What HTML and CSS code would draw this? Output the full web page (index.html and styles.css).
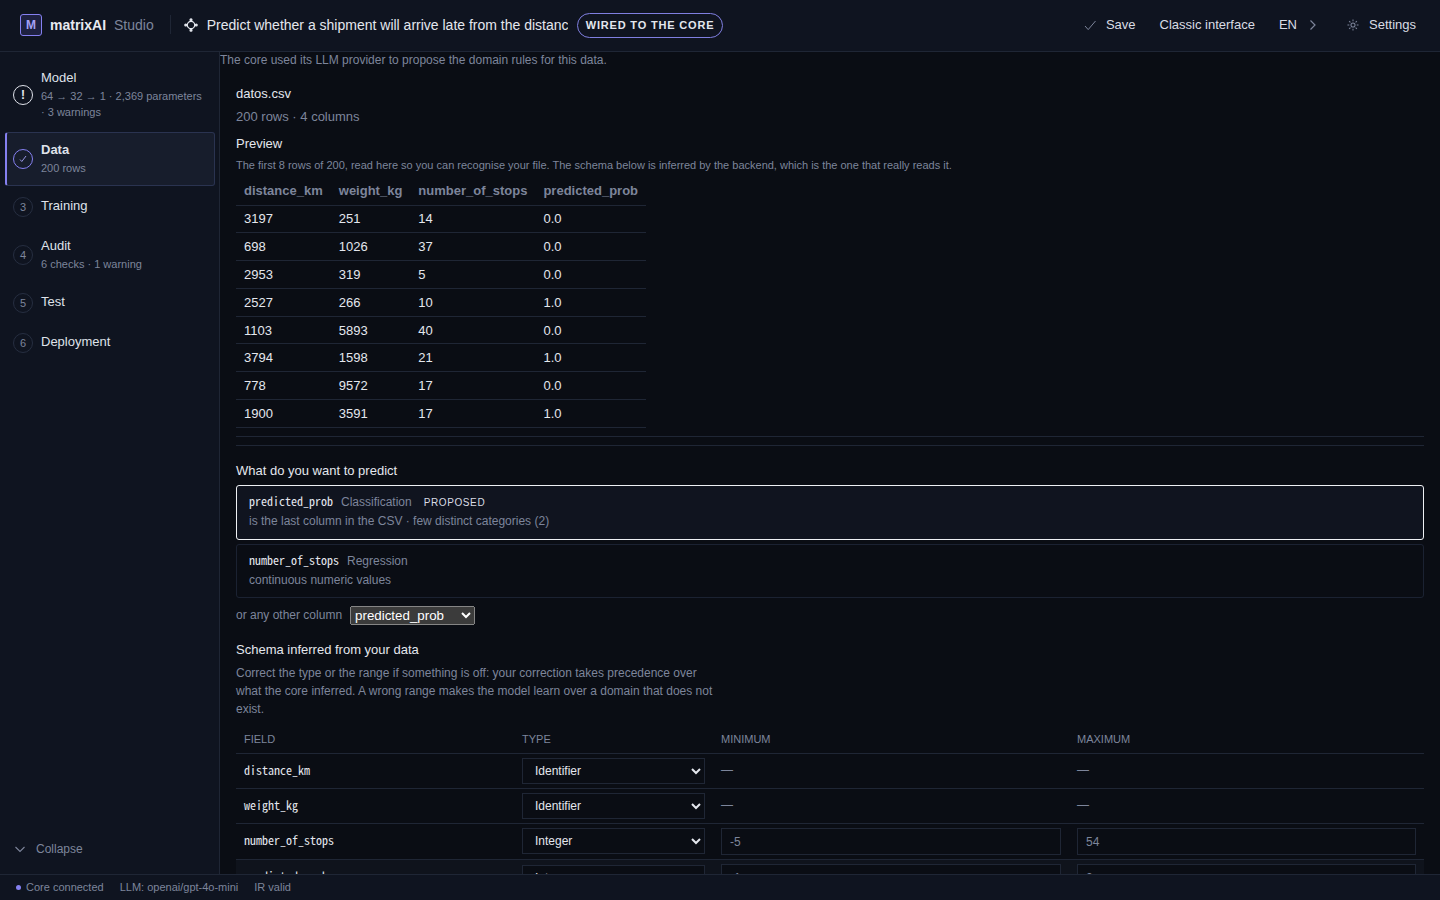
FILE: index.html
```html
<!DOCTYPE html>
<html lang="en">
<head>
<meta charset="utf-8">
<title>matrixAI Studio</title>
<link rel="stylesheet" href="styles.css">
</head>
<body>
<div class="app">
  <header class="topbar">
    <div class="brand">
      <span class="logo">M</span>
      <span class="brand-name">matrixAI</span>
      <span class="brand-sub">Studio</span>
    </div>
    <span class="divider"></span>
    <svg class="nodes" width="14" height="14" viewBox="0 0 14 14" fill="none" stroke="currentColor" stroke-width="1.2"><circle cx="7" cy="7" r="3.700"/><circle cx="7" cy="1.800" r="1" fill="currentColor"/><circle cx="7" cy="12.200" r="1" fill="currentColor"/><circle cx="1.800" cy="7" r="1" fill="currentColor"/><circle cx="12.200" cy="7" r="1" fill="currentColor"/></svg>
    <span class="project-title">Predict whether a shipment will arrive late from the distanc</span>
    <span class="pill">WIRED TO THE CORE</span>
    <nav class="top-actions">
      <span class="action"><svg class="ico" width="12" height="12" viewBox="0 0 12 12" fill="none" stroke="currentColor" stroke-width="1"><path d="M1 7l3.200 3.600L11.500 2"/></svg>Save</span>
      <span class="action">Classic interface</span>
      <span class="action lang">EN<svg class="ico" width="8" height="12" viewBox="0 0 8 12" fill="none" stroke="currentColor" stroke-width="1.200"><path d="M1.500 1.500L6 6l-4.500 4.500"/></svg></span>
      <span class="action"><svg class="ico" width="12" height="12" viewBox="0 0 13 13" fill="none" stroke="currentColor" stroke-width="1.100"><circle cx="6.500" cy="6.500" r="2.200"/><path d="M6.500 0.500v2M6.500 10.500v2M0.500 6.500h2M10.500 6.500h2M2.300 2.300l1.400 1.400M9.300 9.300l1.400 1.400M2.300 10.700l1.400-1.400M9.300 3.700l1.400-1.400"/></svg>Settings</span>
    </nav>
  </header>

  <div class="body">
    <aside class="sidebar">
      <ol class="steps">
        <li class="step">
          <span class="bullet warn">!</span>
          <div class="step-text"><div class="step-title">Model</div><div class="step-sub">64 → 32 → 1 · 2,369 parameters · 3 warnings</div></div>
        </li>
        <li class="step active">
          <span class="bullet done"><svg width="10" height="10" viewBox="0 0 10 10" fill="none" stroke="currentColor" stroke-width="0.900"><path d="M2 5.500l1.800 2L8 2"/></svg></span>
          <div class="step-text"><div class="step-title">Data</div><div class="step-sub">200 rows</div></div>
        </li>
        <li class="step">
          <span class="bullet">3</span>
          <div class="step-text"><div class="step-title">Training</div></div>
        </li>
        <li class="step">
          <span class="bullet">4</span>
          <div class="step-text"><div class="step-title">Audit</div><div class="step-sub">6 checks · 1 warning</div></div>
        </li>
        <li class="step">
          <span class="bullet">5</span>
          <div class="step-text"><div class="step-title">Test</div></div>
        </li>
        <li class="step">
          <span class="bullet">6</span>
          <div class="step-text"><div class="step-title">Deployment</div></div>
        </li>
      </ol>
      <div class="collapse"><svg width="12" height="12" viewBox="0 0 12 12" fill="none" stroke="currentColor" stroke-width="1.100"><path d="M1.500 4L6 8.500 10.500 4"/></svg>Collapse</div>
    </aside>

    <main class="main">
      <p class="lead">The core used its LLM provider to propose the domain rules for this data.</p>
      <section class="panel">
        <div class="file-name">datos.csv</div>
        <div class="file-meta">200 rows · 4 columns</div>
        <h3 class="heading">Preview</h3>
        <p class="hint">The first 8 rows of 200, read here so you can recognise your file. The schema below is inferred by the backend, which is the one that really reads it.</p>
        <table class="preview">
          <thead><tr><th>distance_km</th><th>weight_kg</th><th>number_of_stops</th><th>predicted_prob</th></tr></thead>
          <tbody>
            <tr><td>3197</td><td>251</td><td>14</td><td>0.0</td></tr>
            <tr><td>698</td><td>1026</td><td>37</td><td>0.0</td></tr>
            <tr><td>2953</td><td>319</td><td>5</td><td>0.0</td></tr>
            <tr><td>2527</td><td>266</td><td>10</td><td>1.0</td></tr>
            <tr><td>1103</td><td>5893</td><td>40</td><td>0.0</td></tr>
            <tr><td>3794</td><td>1598</td><td>21</td><td>1.0</td></tr>
            <tr><td>778</td><td>9572</td><td>17</td><td>0.0</td></tr>
            <tr><td>1900</td><td>3591</td><td>17</td><td>1.0</td></tr>
          </tbody>
        </table>
        <hr class="rule">
        <hr class="rule second">

        <h3 class="heading predict">What do you want to predict</h3>
        <div class="choice selected">
          <div class="choice-line"><code class="mono">predicted_prob</code><span class="kind">Classification</span><span class="tag">PROPOSED</span></div>
          <div class="choice-why">is the last column in the CSV · few distinct categories (2)</div>
        </div>
        <div class="choice">
          <div class="choice-line"><code class="mono">number_of_stops</code><span class="kind">Regression</span></div>
          <div class="choice-why">continuous numeric values</div>
        </div>
        <div class="other">
          <span>or any other column</span>
          <select class="native"><option>predicted_prob</option><option>number_of_stops</option><option>weight_kg</option><option>distance_km</option></select>
        </div>

        <h3 class="heading schema-title">Schema inferred from your data</h3>
        <p class="schema-note">Correct the type or the range if something is off: your correction takes precedence over what the core inferred. A wrong range makes the model learn over a domain that does not exist.</p>
        <table class="schema">
          <colgroup><col class="c-field"><col class="c-type"><col class="c-min"><col class="c-max"></colgroup>
          <thead><tr><th>FIELD</th><th>TYPE</th><th>MINIMUM</th><th>MAXIMUM</th></tr></thead>
          <tbody>
            <tr><td><code class="mono">distance_km</code></td><td><select class="field"><option>Identifier</option></select></td><td class="dash">—</td><td class="dash">—</td></tr>
            <tr><td><code class="mono">weight_kg</code></td><td><select class="field"><option>Identifier</option></select></td><td class="dash">—</td><td class="dash">—</td></tr>
            <tr><td><code class="mono">number_of_stops</code></td><td class="type-top"><select class="field"><option>Integer</option></select></td><td><input class="num" value="-5"></td><td><input class="num" value="54"></td></tr>
            <tr class="target"><td><code class="mono">predicted_prob</code><span class="badge">target</span></td><td><select class="field"><option>Integer</option></select></td><td><input class="num" value="-1"></td><td><input class="num" value="2"></td></tr>
          </tbody>
        </table>
      </section>
    </main>
  </div>

  <footer class="status">
    <span class="status-item"><span class="dot"></span>Core connected</span>
    <span class="status-item">LLM: openai/gpt-4o-mini</span>
    <span class="status-item">IR valid</span>
  </footer>
</div>
</body>
</html>
```
FILE: styles.css
```css
* { box-sizing: border-box; }
html { color-scheme: dark; }
html, body { margin: 0; height: 100%; }
body {
  font-family: "Liberation Sans", Arial, sans-serif;
  background: #0a0d14;
  color: #e4e7ee;
  font-size: 13px;
}
.app { height: 900px; display: flex; flex-direction: column; overflow: hidden; }

/* Top bar */
.topbar {
  height: 52px;
  flex: none;
  display: flex;
  align-items: center;
  padding: 0 24px 2px 20px;
  background: #0f1420;
  border-bottom: 1px solid #1f2635;
}
.brand { display: flex; align-items: center; }
.logo {
  width: 22px; height: 22px;
  display: flex; align-items: center; justify-content: center;
  border: 1px solid #8580f0;
  border-radius: 3px;
  background: #1e2140;
  color: #a5a1f5;
  font-size: 12px; font-weight: 700;
  margin-right: 8px;
}
.brand-name { font-size: 14px; font-weight: 700; color: #e8eaf0; margin-right: 8px; }
.brand-sub { font-size: 14px; color: #7d859b; }
.divider { width: 1px; height: 19px; background: #1f2635; margin: 0 13px 0 16px; }
.nodes { color: #e4e7ee; margin-right: 9px; flex: none; }
.project-title { width: 361px; font-size: 14px; white-space: nowrap; overflow: hidden; color: #e4e7ee; }
.pill {
  margin: 1px 0 0 9px;
  height: 25px;
  padding: 0 8px;
  display: flex; align-items: center;
  border: 1px solid #7f7fe0;
  border-radius: 13px;
  font-size: 11px; font-weight: 700;
  letter-spacing: 0.82px;
  color: #e4e7ee;
  white-space: nowrap;
}
.top-actions { margin-left: auto; display: flex; align-items: center; gap: 24px; color: #d9dce4; }
.action { display: flex; align-items: center; gap: 10px; font-size: 13px; }
.lang { gap: 12px; margin-right: 6px; }
.ico { color: #7d859b; flex: none; }

/* Layout */
.body { flex: 1; min-height: 0; display: flex; }
.sidebar {
  width: 220px;
  flex: none;
  display: flex;
  flex-direction: column;
  background: #0f1420;
  border-right: 1px solid #1f2635;
  padding: 8px 4px 0 5px;
}
.steps { list-style: none; margin: 0; padding: 0; display: flex; flex-direction: column; gap: 2px; flex: 1; }
.step {
  display: flex; align-items: center; gap: 8px;
  min-height: 38px;
  padding: 0 8px 0 6px;
  border: 1px solid transparent;
  border-left-width: 2px;
  border-radius: 3px;
}
.step.active { background: #171d2c; border-color: #2a3350; border-left-color: #8580f0; }
.step-text { flex: 1; min-width: 0; align-self: flex-start; padding: 9px 0 9px; }
.step-title { font-size: 13px; line-height: 16px; color: #dfe2ea; }
.active .step-title { font-weight: 700; }
.step-sub { margin-top: 2px; font-size: 11px; line-height: 16px; color: #7d859b; }
.bullet {
  width: 20px; height: 20px; flex: none;
  display: flex; align-items: center; justify-content: center;
  border: 1px solid #262e40;
  border-radius: 50%;
  font-size: 11px; color: #7d859b;
}
.bullet.warn { border-color: #dfe2ea; color: #e4e7ee; font-weight: 700; font-size: 12px; }
.bullet.done { border-color: #8580f0; color: #a5a1f5; }
.collapse {
  display: flex; align-items: center; gap: 10px;
  height: 20px;
  margin: 0 0 15px 9px;
  font-size: 12px; color: #7d859b;
}

/* Main */
.main { flex: 1; min-width: 0; overflow: hidden; }
.lead { margin: 1px 0 0; font-size: 12px; line-height: 15px; color: #7d859b; }
.panel { padding: 18px 16px 0; }
.file-name { font-size: 13px; line-height: 16px; color: #e4e7ee; }
.file-meta { margin-top: 7px; font-size: 13px; line-height: 16px; color: #7d859b; }
.heading { margin: 0; font-size: 13px; line-height: 16px; font-weight: 400; color: #e4e7ee; }
.file-meta + .heading { margin-top: 11px; }
.hint { margin: 6px 0 0; font-size: 11px; line-height: 14px; color: #7d859b; }

.preview { border-collapse: collapse; margin-top: 5px; font-size: 13px; }
.preview th { text-align: left; font-weight: 700; color: #7d859b; height: 28px; padding: 0 8px; border-bottom: 1px solid #1f2635; }
.preview td { height: 27.8px; padding: 0 8px; color: #e4e7ee; border-bottom: 1px solid #1f2635; }
.rule { border: 0; border-top: 1px solid #1f2635; margin: 8px 0 0; }
.rule.second { margin-top: 8px; }

.predict { margin-top: 17px; }
.choice {
  margin-top: 4px;
  padding: 8px 12px 7px;
  border: 1px solid #1b2232;
  border-radius: 3px;
  height: 54px;
}
.predict + .choice { margin-top: 6px; }
.choice.selected { border-color: #eef0f4; background: #10141f; height: 55px; }
.choice-line { display: flex; align-items: baseline; gap: 8px; height: 17px; line-height: 17px; }
.mono { font-family: "Noto Sans Mono CJK SC", monospace; font-size: 12px; line-height: 1; color: #e4e7ee; }
.kind { font-size: 12px; color: #7d859b; }
.tag { margin-left: 4px; font-size: 10px; letter-spacing: 0.6px; color: #d9dce4; }
.choice-why { margin-top: 2px; font-size: 12px; line-height: 16px; color: #7d859b; }
.other { display: flex; align-items: center; gap: 8px; margin-top: 8px; font-size: 12px; color: #7d859b; }
.native { font-size: 13.33px; font-family: "Liberation Sans", Arial, sans-serif; width: 125px; height: 19px; }

.schema-title { margin-top: 17px; }
.schema-note { margin: 6px 0 0; max-width: 480px; font-size: 12px; line-height: 18px; color: #7d859b; }
.schema { width: 100%; table-layout: fixed; border-collapse: collapse; margin-top: 6px; }
.c-field { width: 278px; }
.c-type { width: 199px; }
.c-max { width: 355px; }
.schema th { text-align: left; font-size: 11px; font-weight: 400; color: #7d859b; height: 30px; padding: 0 8px; border-bottom: 1px solid #1f2635; }
.schema td { padding: 4px 8px; border-bottom: 1px solid #1f2635; font-size: 12px; line-height: 14px; }
.schema .mono { vertical-align: 1px; }
.schema .type-top { vertical-align: top; }
.schema .target { background: #0f131c; }
.schema .dash { color: #7d859b; padding-bottom: 6px; }
.field {
  width: 100%; height: 26px; display: block;
  padding: 0 8px;
  background: #0a0d14; color: #e4e7ee;
  border: 1px solid #1f2635; border-radius: 0;
  font-size: 12px; font-family: "Liberation Sans", Arial, sans-serif;
}
.num {
  width: 100%; height: 27px; display: block;
  padding: 0 8px;
  background: #0a0d14; color: #7d859b;
  border: 1px solid #1f2635; border-radius: 0;
  font-size: 12px; font-family: "Liberation Sans", Arial, sans-serif;
}
.badge { margin-left: 8px; font-size: 9px; padding: 0 3px; color: #7d859b; background: #171d2c; }

/* Status bar */
.status {
  height: 26px; flex: none;
  display: flex; align-items: center; gap: 16px;
  padding: 0 16px 1px;
  background: #0f1420;
  border-top: 1px solid #1f2635;
  font-size: 11px; color: #7d859b;
}
.status-item { display: flex; align-items: center; }
.dot { width: 5px; height: 5px; border-radius: 50%; background: #8580f0; margin-right: 5px; }
```
